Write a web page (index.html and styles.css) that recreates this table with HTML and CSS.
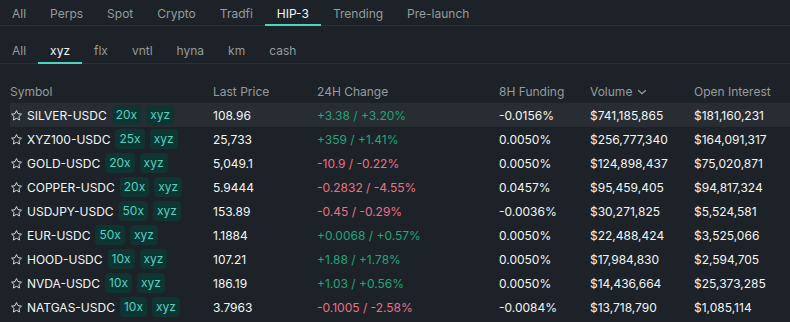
FILE: index.html
```html
<!DOCTYPE html>
<html lang="en">
<head>
    <meta charset="UTF-8">
    <title>HIP-3 Markets</title>
    <link rel="stylesheet" href="styles.css">
</head>
<body>
    <nav class="tabs">
        <span class="tab">All</span>
        <span class="tab">Perps</span>
        <span class="tab">Spot</span>
        <span class="tab">Crypto</span>
        <span class="tab">Tradfi</span>
        <span class="tab active">HIP-3</span>
        <span class="tab">Trending</span>
        <span class="tab">Pre-launch</span>
    </nav>
    <nav class="tabs sub">
        <span class="tab">All</span>
        <span class="tab active">xyz</span>
        <span class="tab">flx</span>
        <span class="tab">vntl</span>
        <span class="tab">hyna</span>
        <span class="tab">km</span>
        <span class="tab">cash</span>
    </nav>

    <div class="table">
        <div class="row head">
            <span>Symbol</span>
            <span>Last Price</span>
            <span>24H Change</span>
            <span>8H Funding</span>
            <span class="sort">Volume
                <svg width="10" height="10" viewBox="0 0 10 10" fill="none" stroke="currentColor" stroke-width="1.2" stroke-linecap="round" stroke-linejoin="round"><path d="M1.5 3.5 5 6.8 8.5 3.5"/></svg>
            </span>
            <span>Open Interest</span>
        </div>
        <div id="rows"></div>
    </div>

    <script>
        const markets = [
            ['SILVER-USDC', '20x', '108.96', '+3.38 / +3.20%', '-0.0156%', '$741,185,865', '$181,160,231'],
            ['XYZ100-USDC', '25x', '25,733', '+359 / +1.41%', '0.0050%', '$256,777,340', '$164,091,317'],
            ['GOLD-USDC', '20x', '5,049.1', '-10.9 / -0.22%', '0.0050%', '$124,898,437', '$75,020,871'],
            ['COPPER-USDC', '20x', '5.9444', '-0.2832 / -4.55%', '0.0457%', '$95,459,405', '$94,817,324'],
            ['USDJPY-USDC', '50x', '153.89', '-0.45 / -0.29%', '-0.0036%', '$30,271,825', '$5,524,581'],
            ['EUR-USDC', '50x', '1.1884', '+0.0068 / +0.57%', '0.0050%', '$22,488,424', '$3,525,066'],
            ['HOOD-USDC', '10x', '107.21', '+1.88 / +1.78%', '0.0050%', '$17,984,830', '$2,594,705'],
            ['NVDA-USDC', '10x', '186.19', '+1.03 / +0.56%', '0.0050%', '$14,436,664', '$25,373,285'],
            ['NATGAS-USDC', '10x', '3.7963', '-0.1005 / -2.58%', '-0.0084%', '$13,718,790', '$1,085,114']
        ];

        const star = '<svg class="star" width="13" height="13" viewBox="0 0 24 24" fill="none" stroke="currentColor" stroke-width="1.8" stroke-linejoin="round"><path d="M12 2.8l2.8 5.9 6.4.8-4.7 4.4 1.2 6.4L12 17.2l-5.7 3.1 1.2-6.4-4.7-4.4 6.4-.8z"/></svg>';

        document.getElementById('rows').innerHTML = markets.map(function (m, i) {
            const dir = m[3].charAt(0) === '+' ? 'up' : 'down';
            return '<div class="row' + (i === 0 ? ' hover' : '') + '">' +
                '<span class="symbol">' + star + '<span class="name">' + m[0] + '</span>' +
                '<span class="badge">' + m[1] + '</span><span class="badge">xyz</span></span>' +
                '<span>' + m[2] + '</span>' +
                '<span class="' + dir + '">' + m[3] + '</span>' +
                '<span>' + m[4] + '</span>' +
                '<span>' + m[5] + '</span>' +
                '<span>' + m[6] + '</span>' +
                '</div>';
        }).join('');
    </script>
</body>
</html>
```
FILE: styles.css
```css
:root {
    --bg: #1c2227;
    --line: #2a3035;
    --text: #f3f6f6;
    --muted: #959c9e;
    --teal: #50d2c1;
    --green: #1fa67d;
    --red: #ed7088;
}

* {
    margin: 0;
    padding: 0;
    box-sizing: border-box;
}

body {
    font-family: Inter, "Liberation Sans", sans-serif;
    font-size: 12px;
    background-color: var(--bg);
    color: var(--text);
    width: 790px;
    height: 322px;
    overflow: hidden;
}

.tabs {
    display: flex;
    height: 26px;
    padding-top: 3px;
    border-bottom: 1px solid var(--line);
}

.tabs.sub {
    height: 38px;
    padding-top: 13px;
}

.tab {
    display: flex;
    align-items: center;
    padding: 0 12px;
    color: var(--muted);
    border-bottom: 2px solid transparent;
    margin-bottom: -1px;
}

.tab.active {
    color: var(--text);
    border-bottom-color: var(--teal);
}

.table {
    padding-top: 16px;
}

.row {
    display: grid;
    grid-template-columns: 203px 104px 182px 91px 104px 1fr;
    align-items: center;
    height: 24px;
    padding-left: 10px;
}

.row.head {
    height: 23px;
    color: var(--muted);
}

.row.hover {
    background-color: #272d32;
    margin-left: 10px;
    padding-left: 0;
}

.sort {
    display: flex;
    align-items: center;
    gap: 5px;
}

.symbol {
    display: flex;
    align-items: center;
}

.star {
    color: #d9dddd;
    margin: 0 4px 0 0;
}

.name {
    margin-right: 5px;
}

.badge {
    height: 20px;
    line-height: 20px;
    padding: 0 4px;
    margin-right: 5px;
    border-radius: 4px;
    background-color: #0f3532;
    color: var(--teal);
}

.up {
    color: var(--green);
}

.down {
    color: var(--red);
}
```
